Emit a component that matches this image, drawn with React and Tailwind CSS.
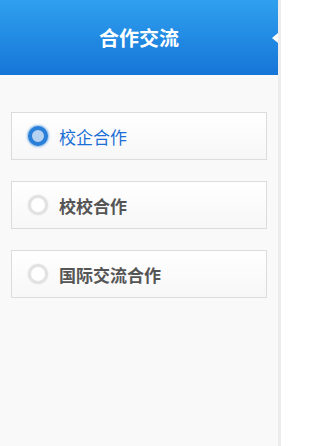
import React from "react";

const items = [
  { label: "校企合作", selected: true },
  { label: "校校合作", selected: false },
  { label: "国际交流合作", selected: false },
];

export default function App() {
  return (
    <div
      className="flex w-[281px] h-[446px] bg-[#f9f9f9]"
      style={{ fontFamily: '"Noto Sans CJK SC", "Noto Sans", sans-serif' }}
    >
      <div className="flex flex-col w-[278px] h-full bg-[#f9f9f9]">
        <div className="relative flex items-center justify-center h-[75px] bg-gradient-to-b from-[#30a0ee] to-[#1675d8]">
          <span className="text-white font-bold text-[20px] leading-none">合作交流</span>
          <span className="absolute right-0 top-[33px] w-0 h-0 border-y-[5px] border-y-transparent border-r-[6px] border-r-white" />
        </div>
        <div className="flex flex-col gap-[21px] mt-[37px] mx-[11px]">
          {items.map((it) => (
            <div
              key={it.label}
              className="flex items-center h-[48px] border border-[#dcdcdc] bg-gradient-to-b from-white to-[#f7f7f7] pl-[16px]"
            >
              {it.selected ? (
                <span className="w-[20px] h-[20px] rounded-full border-[4px] border-[#2a7fd9] bg-[#b7d2f0] shadow-[0_0_2px_1px_rgba(42,127,217,0.5)]" />
              ) : (
                <span className="w-[20px] h-[20px] rounded-full border-[3px] border-[#e2e2e2] bg-white shadow-[0_0_2px_rgba(0,0,0,0.12)]" />
              )}
              <span
                className={
                  it.selected
                    ? "ml-[11px] text-[17px] leading-none text-[#1b6fd6]"
                    : "ml-[11px] text-[17px] leading-none font-bold text-[#555555]"
                }
              >
                {it.label}
              </span>
            </div>
          ))}
        </div>
      </div>
      <div className="w-[3px] h-full bg-[#ededed]" />
    </div>
  );
}
